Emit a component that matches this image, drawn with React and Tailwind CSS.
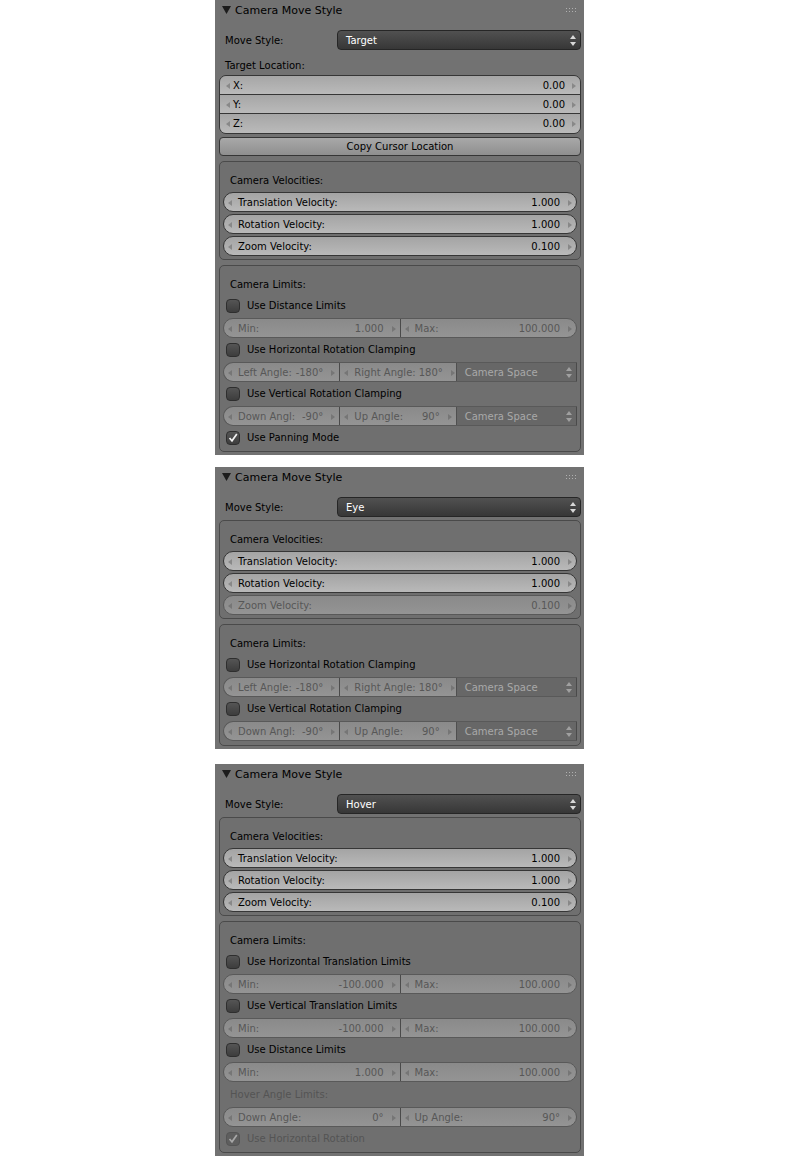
import React from "react";

// Blender-style "Camera Move Style" panels, three states of the same panel

const fieldOn = "border-[#363636] bg-linear-to-b from-[#a4a4a4] to-[#b9b9b9] text-black";
const fieldOff = "border-[#595959] bg-linear-to-b from-[#8a8a8a] to-[#949494] text-[#575757]";

function Arrow({ right, color }) {
  return (
    <svg width="4" height="6" viewBox="0 0 4 6" className="shrink-0">
      {right ? <polygon points="0,0 4,3 0,6" fill={color} /> : <polygon points="4,0 0,3 4,6" fill={color} />}
    </svg>
  );
}

function UpDown({ color }) {
  return (
    <svg width="6" height="11" viewBox="0 0 6 11" className="shrink-0">
      <polygon points="3,0 6,4 0,4" fill={color} />
      <polygon points="0,7 6,7 3,11" fill={color} />
    </svg>
  );
}

function NumSeg({ label, value, disabled, first }) {
  const c = disabled ? "#767676" : "#888888";
  return (
    <div className={`flex flex-1 min-w-0 items-center h-full pl-[4px] pr-[4px] pt-[1px] ${first ? "" : "border-l border-[#4a4a4a]"}`}>
      <Arrow color={c} />
      <span className="ml-[6px] flex-1 whitespace-nowrap">{label}</span>
      <span className="pl-[3px] mr-[8px] whitespace-nowrap">{value}</span>
      <Arrow right color={c} />
    </div>
  );
}

function MenuSeg({ label }) {
  return (
    <div className="flex flex-1 min-w-0 items-center h-full pl-[8px] pr-[4px] pt-[1px] bg-[#676767] border-l border-[#4f4f4f] text-[#a9a9a9]">
      <span className="flex-1">{label}</span>
      <UpDown color="#a0a0a0" />
    </div>
  );
}

function Field({ label, value, disabled }) {
  return (
    <div className={`flex h-[20px] mt-[2px] first:mt-0 rounded-full border overflow-hidden ${disabled ? fieldOff : fieldOn}`}>
      <NumSeg label={label} value={value} disabled={disabled} first />
    </div>
  );
}

function SplitRow({ items, menu, disabled, className }) {
  return (
    <div className={`flex h-[20px] border overflow-hidden ${menu ? "rounded-l-full rounded-r-[5px] border-r-[#4a4a4a]" : "rounded-full"} ${disabled ? fieldOff : fieldOn} ${className}`}>
      {items.map((it, i) => (
        <NumSeg key={i} label={it[0]} value={it[1]} disabled={disabled} first={i === 0} />
      ))}
      {menu && <MenuSeg label={menu} />}
    </div>
  );
}

function Check({ label, checked, disabled, className }) {
  return (
    <div className={`flex items-center h-[20px] pl-[3px] pt-[2px] ${className}`}>
      <div
        className={`w-[14px] h-[14px] rounded-[4px] border flex items-center justify-center ${
          disabled ? "border-[#555] bg-[#5e5e5e]" : "border-[#2e2e2e] bg-linear-to-b from-[#555555] to-[#3d3d3d]"
        }`}
      >
        {checked && (
          <svg width="10" height="10" viewBox="0 0 10 10">
            <path d="M1.5 5 L4 7.8 L8.8 1" stroke={disabled ? "#a8a8a8" : "#f2f2f2"} strokeWidth="1.7" fill="none" />
          </svg>
        )}
      </div>
      <span className={`ml-[7px] ${disabled ? "text-[#545454]" : "text-black"}`}>{label}</span>
    </div>
  );
}

function Box({ children, className }) {
  return (
    <div className={`border border-[#4a4a4a] rounded-[5px] bg-[#6f6f6f] px-[3px] pt-[9px] ${className}`}>
      {children}
    </div>
  );
}

function BoxLabel({ children, disabled, className }) {
  return (
    <div className={`flex items-center h-[18px] pl-[7px] pt-[2px] ${disabled ? "text-[#545454]" : "text-black"} ${className || ""}`}>
      {children}
    </div>
  );
}

function Header() {
  return (
    <div className="flex items-center h-[20px] pl-[7px] pr-[7px]">
      <svg width="9" height="8" viewBox="0 0 9 8">
        <polygon points="0,0 9,0 4.5,8" fill="#1c1c1c" />
      </svg>
      <span className="ml-[4px] text-[11px] text-black flex-1">Camera Move Style</span>
      <svg width="11" height="4" viewBox="0 0 11 4">
        {[0, 3, 6, 9].map((x) => (
          <g key={x}>
            <rect x={x} y="0" width="1" height="1" fill="#b0b0b0" />
            <rect x={x} y="3" width="1" height="1" fill="#b0b0b0" />
          </g>
        ))}
      </svg>
    </div>
  );
}

function MoveStyle({ value }) {
  return (
    <div className="flex items-center h-[20px] mt-[10px]">
      <span className="w-[118px] pl-[6px] pt-[2px] text-black">Move Style:</span>
      <div className="flex flex-1 items-center h-full rounded-[4px] border border-[#262626] bg-linear-to-b from-[#515151] to-[#373737] pl-[8px] pr-[4px] pt-[1px] text-white">
        <span className="flex-1">{value}</span>
        <UpDown color="#d8d8d8" />
      </div>
    </div>
  );
}

function Velocities({ zoomOff, className }) {
  return (
    <Box className={`pb-[3px] ${className}`}>
      <BoxLabel>Camera Velocities:</BoxLabel>
      <div className="mt-[3px]">
        <Field label="Translation Velocity:" value="1.000" />
        <Field label="Rotation Velocity:" value="1.000" />
        <Field label="Zoom Velocity:" value="0.100" disabled={zoomOff} />
      </div>
    </Box>
  );
}

function Panel({ children, className }) {
  return (
    <div className={`w-[369px] ml-[215px] bg-[#727272] pl-[4px] pr-[3px] pb-[3px] ${className || ""}`}>
      <div className="-ml-[4px] -mr-[3px]">
        <Header />
      </div>
      {children}
    </div>
  );
}

const angleRows = {
  h: [["Left Angle:", "-180°"], ["Right Angle:", "180°"]],
  v: [["Down Angl:", "-90°"], ["Up Angle:", "90°"]],
};

export default function App() {
  return (
    <div className="w-[800px] min-h-[1156px] bg-white font-['DejaVu_Sans',sans-serif] text-[10px] leading-none">
      {/* Target */}
      <Panel>
        <MoveStyle value="Target" />
        <div className="flex items-center h-[20px] mt-[4px] pl-[6px] pt-[3px] text-black">Target Location:</div>
        <div className="mt-[1px] border border-[#363636] rounded-[7px] overflow-hidden divide-y divide-[#363636]">
          {["X:", "Y:", "Z:"].map((l) => (
            <div key={l} className="flex items-center h-[19px] pl-[6px] pr-[4px] pt-[1px] bg-linear-to-b from-[#a6a6a6] to-[#bababa] text-black">
              <Arrow color="#888888" />
              <span className="ml-[3px] flex-1">{l}</span>
              <span className="mr-[7px]">0.00</span>
              <Arrow right color="#888888" />
            </div>
          ))}
        </div>
        <div className="mt-[3px] h-[19px] flex items-center justify-center pt-[1px] rounded-[4px] border border-[#363636] bg-linear-to-b from-[#a8a8a8] to-[#8f8f8f] text-black">
          Copy Cursor Location
        </div>
        <Velocities className="mt-[5px]" />
        <Box className="mt-[5px] pb-[4px]">
          <BoxLabel>Camera Limits:</BoxLabel>
          <Check label="Use Distance Limits" className="mt-[2px]" />
          <SplitRow items={[["Min:", "1.000"], ["Max:", "100.000"]]} disabled className="mt-[3px]" />
          <Check label="Use Horizontal Rotation Clamping" className="mt-[1px]" />
          <SplitRow items={angleRows.h} menu="Camera Space" disabled className="mt-[3px]" />
          <Check label="Use Vertical Rotation Clamping" className="mt-[1px]" />
          <SplitRow items={angleRows.v} menu="Camera Space" disabled className="mt-[3px]" />
          <Check label="Use Panning Mode" checked className="mt-[1px]" />
        </Box>
      </Panel>

      {/* Eye */}
      <Panel className="mt-[12px]">
        <MoveStyle value="Eye" />
        <Velocities zoomOff className="mt-[3px]" />
        <Box className="mt-[5px] pb-[4px]">
          <BoxLabel>Camera Limits:</BoxLabel>
          <Check label="Use Horizontal Rotation Clamping" className="mt-[2px]" />
          <SplitRow items={angleRows.h} menu="Camera Space" disabled className="mt-[3px]" />
          <Check label="Use Vertical Rotation Clamping" className="mt-[1px]" />
          <SplitRow items={angleRows.v} menu="Camera Space" disabled className="mt-[3px]" />
        </Box>
      </Panel>

      {/* Hover */}
      <Panel className="mt-[15px]">
        <MoveStyle value="Hover" />
        <Velocities className="mt-[3px]" />
        <Box className="mt-[5px] pb-[4px]">
          <BoxLabel>Camera Limits:</BoxLabel>
          <Check label="Use Horizontal Translation Limits" className="mt-[2px]" />
          <SplitRow items={[["Min:", "-100.000"], ["Max:", "100.000"]]} disabled className="mt-[3px]" />
          <Check label="Use Vertical Translation Limits" className="mt-[1px]" />
          <SplitRow items={[["Min:", "-100.000"], ["Max:", "100.000"]]} disabled className="mt-[3px]" />
          <Check label="Use Distance Limits" className="mt-[1px]" />
          <SplitRow items={[["Min:", "1.000"], ["Max:", "100.000"]]} disabled className="mt-[3px]" />
          <BoxLabel disabled className="mt-[2px] h-[20px]">Hover Angle Limits:</BoxLabel>
          <SplitRow items={[["Down Angle:", "0°"], ["Up Angle:", "90°"]]} disabled className="mt-[3px]" />
          <Check label="Use Horizontal Rotation" checked disabled className="mt-[1px]" />
        </Box>
      </Panel>
    </div>
  );
}
